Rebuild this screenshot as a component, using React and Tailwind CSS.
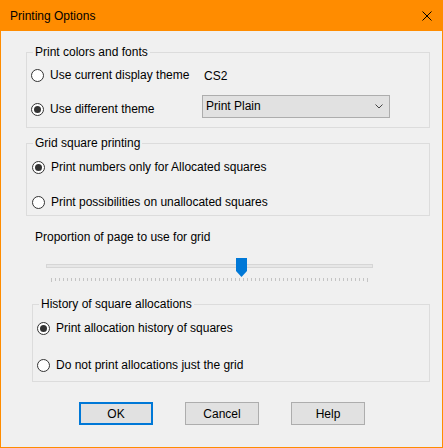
import React from 'react'

function Radio({ checked }) {
  return (
    <span className="grid h-[13px] w-[13px] shrink-0 place-items-center rounded-full border border-[#333333] bg-white">
      {checked && <span className="h-[7px] w-[7px] rounded-full bg-[#333333]" />}
    </span>
  )
}

function RadioRow({ checked, label, className = '' }) {
  return (
    <div className={`flex h-[16px] items-center ${className}`}>
      <Radio checked={checked} />
      <span className="ml-[6px] whitespace-nowrap">{label}</span>
    </div>
  )
}

function Group({ title, className = '', children }) {
  return (
    <fieldset className={`border border-[#dcdcdc] ${className}`}>
      <legend className="ml-[6px] px-[2px] text-[12px] leading-[14px]">{title}</legend>
      {children}
    </fieldset>
  )
}

function Slider() {
  const ticks = Array.from({ length: 80 }, (_, i) => i)
  return (
    <svg className="ml-[44px] mt-[13px] block" width="330" height="26" viewBox="0 0 330 26">
      <rect x="1.5" y="7.5" width="326" height="3" fill="#e7e7e7" stroke="#d6d6d6" />
      {ticks.map((i) => {
        const x = 6.5 + i * 4
        const end = i === 0 || i === 79
        return <line key={i} x1={x} x2={x} y1="21" y2={end ? 25 : 24} stroke="#c4c4c4" strokeWidth="1" />
      })}
      <polygon points="191,1 202,1 202,14 196.5,20 191,14" fill="#0078d7" />
    </svg>
  )
}

function Button({ label, primary }) {
  return (
    <button
      type="button"
      className={`grid h-[23px] w-[74px] place-items-center bg-[#e1e1e1] text-[12px] text-black ${primary ? 'border-2 border-[#0078d7]' : 'border border-[#adadad]'}`}
    >
      {label}
    </button>
  )
}

export default function App() {
  return (
    <div className="flex h-[448px] w-[443px] flex-col font-['Liberation_Sans',Arial,sans-serif] text-[12px] leading-[14px] text-black">
      {/* title bar */}
      <div className="flex h-[31px] shrink-0 items-center bg-[#ff8c00] pl-[10px] pr-[11px]">
        <span className="text-[12px]">Printing Options</span>
        <svg className="ml-auto" width="10" height="10" viewBox="0 0 10 10">
          <path d="M0.5 0.5 L9.5 9.5 M9.5 0.5 L0.5 9.5" stroke="#000" strokeWidth="1" />
        </svg>
      </div>

      <div className="flex-1 border-x border-b border-[#ff8c00] bg-[#f0f0f0]">
        <Group title="Print colors and fonts" className="ml-[25px] mt-[14px] w-[404px] pb-[9px]">
          <div className="mt-[8px] flex h-[16px] items-center pl-[4px]">
            <Radio />
            <span className="ml-[6px] w-[152px] whitespace-nowrap">Use current display theme</span>
            <span className="pl-[2px] pt-[2px]">CS2</span>
          </div>
          <div className="mt-[12px] flex items-start pl-[4px]">
            <div className="mt-[6px] flex h-[16px] items-center">
              <Radio checked />
              <span className="ml-[6px] w-[152px] whitespace-nowrap">Use different theme</span>
            </div>
            <div className="flex h-[23px] w-[188px] items-center border border-[#adadad] bg-[#e1e1e1] pl-[3px] pr-[6px]">
              <span className="-mt-[2px]">Print Plain</span>
              <svg className="ml-auto" width="8" height="5" viewBox="0 0 8 5">
                <path d="M0.5 0.5 L4 4 L7.5 0.5" fill="none" stroke="#444" strokeWidth="1" />
              </svg>
            </div>
          </div>
        </Group>

        <Group title="Grid square printing" className="ml-[25px] mt-[8px] w-[404px] pb-[5px]">
          <RadioRow checked label="Print numbers only for Allocated squares" className="mt-[9px] pl-[5px]" />
          <RadioRow label="Print possibilities on unallocated squares" className="mt-[19px] pl-[5px]" />
        </Group>

        <p className="ml-[34px] mt-[14px]">Proportion of page to use for grid</p>

        <Slider />

        <Group title="History of square allocations" className="ml-[31px] mt-[14px] w-[398px] pb-[8px]">
          <RadioRow checked label="Print allocation history of squares" className="mt-[9px] pl-[4px]" />
          <RadioRow label="Do not print allocations just the grid" className="mt-[21px] pl-[4px]" />
        </Group>

        <div className="ml-[78px] mt-[20px] flex gap-[32px]">
          <Button label="OK" primary />
          <Button label="Cancel" />
          <Button label="Help" />
        </div>
      </div>
    </div>
  )
}
